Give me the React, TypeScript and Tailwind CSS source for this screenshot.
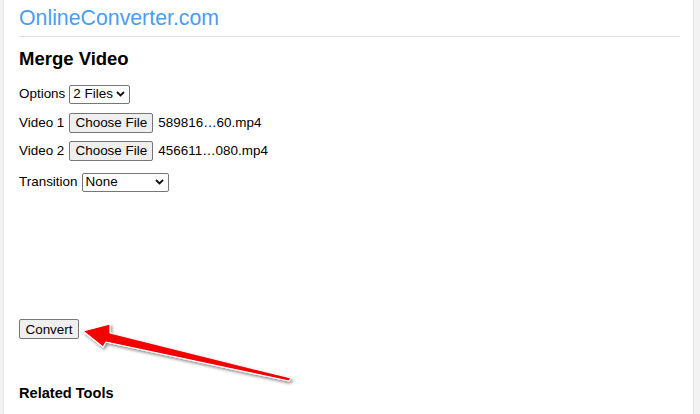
import React from "react"

function Chevron() {
  return (
    <svg width="9" height="6" viewBox="0 0 9 6" className="shrink-0">
      <path d="M1 1 L4.5 4.5 L8 1" fill="none" stroke="#111" strokeWidth="1.8" />
    </svg>
  )
}

function Select({ value, width }: { value: string; width: string }) {
  return (
    <span
      className={`inline-flex items-center justify-between h-[19px] border border-[#767676] rounded-[2px] bg-white pl-[3px] pr-[4px] ${width}`}
    >
      <span>{value}</span>
      <Chevron />
    </span>
  )
}

function FileInput({ label, file }: { label: string; file: string }) {
  return (
    <div className="flex items-center h-[20px]">
      <span>{label}</span>
      <span className="ml-[5px] inline-flex items-center justify-center h-[20px] w-[84px] border border-[#767676] rounded-[2px] bg-[#efefef]">
        Choose File
      </span>
      <span className="ml-[5px]">{file}</span>
    </div>
  )
}

export default function App() {
  return (
    <div
      className="relative flex w-[700px] h-[414px] overflow-hidden bg-white text-black text-[13.45px]"
      style={{ fontFamily: '"Liberation Sans", Arial, sans-serif' }}
    >
      {/* left gutter */}
      <div className="w-[4px] shrink-0 bg-[#f2f2f2] border-r border-[#e6e6e6]" />

      {/* page body */}
      <div className="flex-1 pl-[15px] pr-[13px]">
        <div className="mt-[6px] text-[21.3px] leading-[25px] text-[#4a9df0]">OnlineConverter.com</div>
        <div className="mt-[5px] border-t border-[#dddddd]" />

        <h2 className="mt-[11px] text-[18.5px] leading-[22px] font-bold">Merge Video</h2>

        <div className="mt-[15px] flex items-center h-[18px]">
          <span>Options</span>
          <span className="ml-[4px]">
            <Select value="2 Files" width="w-[61px]" />
          </span>
        </div>

        <div className="mt-[10px]">
          <FileInput label="Video 1" file="589816…60.mp4" />
        </div>
        <div className="mt-[8px]">
          <FileInput label="Video 2" file="456611…080.mp4" />
        </div>

        <div className="mt-[12px] flex items-center h-[18px]">
          <span>Transition</span>
          <span className="ml-[4px]">
            <Select value="None" width="w-[87px]" />
          </span>
        </div>

        <button className="mt-[128px] h-[20px] w-[60px] border border-[#767676] rounded-[2px] bg-[#efefef] text-[13.45px]">
          Convert
        </button>

        <h3 className="mt-[44px] text-[14.6px] leading-[18px] font-bold">Related Tools</h3>
      </div>

      {/* right gutter */}
      <div className="w-[7px] shrink-0 bg-[#f2f2f2] border-l border-[#e2e2e2]" />

      {/* annotation arrow */}
      <svg className="absolute left-0 top-0 pointer-events-none" width="700" height="414">
        <defs>
          <filter id="shadow" x="-20%" y="-50%" width="140%" height="200%">
            <feDropShadow dx="1.5" dy="2" stdDeviation="1.5" floodColor="#000" floodOpacity="0.45" />
          </filter>
        </defs>
        <polygon
          points="83,331 110,324 110,333 291,378 289,381 106,342 103,347"
          fill="#f40000"
          stroke="#ffffff"
          strokeWidth="1.2"
          strokeLinejoin="round"
          filter="url(#shadow)"
        />
      </svg>
    </div>
  )
}
